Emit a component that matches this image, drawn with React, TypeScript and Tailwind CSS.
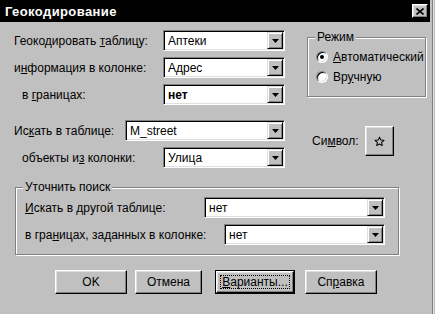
import React from "react";

const raised =
  "bg-[#c0c0c0] border border-t-white border-l-white border-r-black border-b-black shadow-[inset_-1px_-1px_0_#808080,inset_1px_1px_0_#dfdfdf]";

function DropBtn() {
  return (
    <div className="w-[16px] h-[17px] mr-[1px] shrink-0 bg-[#c0c0c0] border border-t-[#dfdfdf] border-l-[#dfdfdf] border-r-black border-b-black shadow-[inset_1px_1px_0_#fff,inset_-1px_-1px_0_#808080] flex items-center justify-center">
      <svg width="7" height="4" viewBox="0 0 7 4">
        <path d="M0 0H7L3.5 4Z" fill="#000" />
      </svg>
    </div>
  );
}

function Combo({ value, w, bold }: { value: string; w: string; bold?: boolean }) {
  return (
    <div
      className={`${w} h-[21px] shrink-0 flex items-center bg-white border border-t-[#808080] border-l-[#808080] border-b-white border-r-white shadow-[inset_1px_1px_0_#000,inset_-1px_-1px_0_#dfdfdf]`}
    >
      <span className={`flex-1 pl-[4px] leading-none whitespace-nowrap ${bold ? "font-bold" : ""}`}>{value}</span>
      <DropBtn />
    </div>
  );
}

function Radio({ checked, children }: { checked?: boolean; children: React.ReactNode }) {
  return (
    <div className="h-[20px] flex items-center">
      <div className="w-[12px] h-[12px] rounded-full bg-white border border-t-[#808080] border-l-[#808080] border-r-white border-b-white shadow-[inset_1px_1px_0_#000,inset_-1px_-1px_0_#dfdfdf] flex items-center justify-center">
        {checked && <div className="w-[4px] h-[4px] rounded-full bg-black" />}
      </div>
      <span className="ml-[5px] whitespace-nowrap">{children}</span>
    </div>
  );
}

function Group({ label, className, children }: { label: string; className: string; children: React.ReactNode }) {
  return (
    <div className={`relative border border-[#808080] shadow-[inset_1px_1px_0_#fff,1px_1px_0_#fff] ${className}`}>
      <span className="absolute left-[7px] top-[-8px] px-[2px] bg-[#c0c0c0] leading-[15px] whitespace-nowrap">{label}</span>
      {children}
    </div>
  );
}

function PushBtn({ w, children, def }: { w: string; children: React.ReactNode; def?: boolean }) {
  if (def) {
    return (
      <div className={`${w} h-[24px] border border-black shrink-0`}>
        <div className={`w-full h-full ${raised} flex items-center justify-center p-[3px]`}>
          <div className="w-full h-full border border-dotted border-black flex items-center justify-center leading-none">
            {children}
          </div>
        </div>
      </div>
    );
  }
  return (
    <div className={`${w} h-[24px] shrink-0 ${raised} flex items-center justify-center leading-none`}>{children}</div>
  );
}

export default function App() {
  return (
    <div className="w-[435px] h-[314px] bg-[#c0c0c0] flex overflow-hidden text-black text-[12px] font-['Liberation_Sans',Arial,sans-serif]">
      <div className="w-[430px] flex flex-col">
        {/* Title bar */}
        <div className="h-[22px] bg-black flex items-center justify-between pl-[5px] pr-[2px]">
          <span className="text-white font-bold text-[13px] tracking-[0.4px] leading-none">Геокодирование</span>
          <div className={`w-[16px] h-[14px] ${raised} flex items-center justify-center`}>
            <svg width="8" height="7" viewBox="0 0 8 7">
              <path d="M0.5 0.5L7.5 6.5M7.5 0.5L0.5 6.5" stroke="#000" strokeWidth="1.6" />
            </svg>
          </div>
        </div>

        {/* Body */}
        <div className="flex-1 flex flex-col pl-[14px]">
          <div className="flex pt-[8px]">
            {/* Left column */}
            <div className="w-[271px] flex flex-col">
              <div className="h-[21px] flex items-center justify-between">
                <span>
                  Геокодировать <u>т</u>аблицу:
                </span>
                <Combo value="Аптеки" w="w-[122px]" />
              </div>
              <div className="h-[21px] mt-[6px] flex items-center justify-between">
                <span>
                  и<u>н</u>формация в колонке:
                </span>
                <Combo value="Адрес" w="w-[122px]" />
              </div>
              <div className="h-[21px] mt-[6px] flex items-center justify-between">
                <span className="pl-[8px]">
                  в <u>г</u>раницах:
                </span>
                <Combo value="нет" w="w-[122px]" bold />
              </div>
              <div className="h-[21px] mt-[15px] flex items-center justify-between">
                <span>
                  Ис<u>к</u>ать в таблице:
                </span>
                <Combo value="M_street" w="w-[160px]" />
              </div>
              <div className="h-[21px] mt-[6px] flex items-center justify-between">
                <span className="pl-[8px]">
                  объекты и<u>з</u> колонки:
                </span>
                <Combo value="Улица" w="w-[122px]" />
              </div>
            </div>

            {/* Right column */}
            <div className="ml-[22px] pt-[7px] flex flex-col">
              <Group label="Режим" className="w-[119px] h-[60px] pt-[9px] pl-[8px]">
                <Radio checked>
                  <u>А</u>втоматический
                </Radio>
                <Radio>
                  Вр<u>у</u>чную
                </Radio>
              </Group>
              <div className="mt-[29px] pl-[5px] flex items-center">
                <span>
                  Си<u>м</u>вол:
                </span>
                <div className={`ml-[6px] w-[29px] h-[30px] ${raised} flex items-center justify-center`}>
                  <svg width="11" height="11" viewBox="0 0 24 24">
                    <path
                      d="M12 2.5l2.9 6.3 6.9.7-5.2 4.6 1.5 6.8L12 17.4l-6.1 3.5 1.5-6.8L2.2 9.5l6.9-.7z"
                      fill="none"
                      stroke="#000"
                      strokeWidth="2.2"
                      strokeLinejoin="round"
                    />
                  </svg>
                </div>
              </div>
            </div>
          </div>

          {/* Уточнить поиск */}
          <Group label="Уточнить поиск" className="mt-[19px] ml-[1px] w-[384px] h-[68px] pt-[9px] pl-[9px] pr-[13px]">
            <div className="h-[21px] flex items-center justify-between">
              <span>
                <u>И</u>скать в другой таблице:
              </span>
              <Combo value="нет" w="w-[181px]" />
            </div>
            <div className="h-[21px] mt-[6px] flex items-center justify-between">
              <span>
                в гра<u>н</u>ицах, заданных в колонке:
              </span>
              <Combo value="нет" w="w-[161px]" />
            </div>
          </Group>

          {/* Buttons */}
          <div className="mt-[15px] pl-[41px] flex">
            <PushBtn w="w-[72px]">OK</PushBtn>
            <div className="ml-[8px]">
              <PushBtn w="w-[67px]">Отмена</PushBtn>
            </div>
            <div className="ml-[13px]">
              <PushBtn w="w-[80px]" def>
                <span>
                  <u>В</u>арианты...
                </span>
              </PushBtn>
            </div>
            <div className="ml-[10px]">
              <PushBtn w="w-[72px]">
                <span>
                  Сп<u>р</u>авка
                </span>
              </PushBtn>
            </div>
          </div>
        </div>
      </div>
      {/* Right window frame */}
      <div className="w-[5px] flex">
        <div className="w-[2px]" />
        <div className="w-[1px] bg-[#808080]" />
        <div className="w-[1px] bg-[#dfdfdf]" />
      </div>
    </div>
  );
}
